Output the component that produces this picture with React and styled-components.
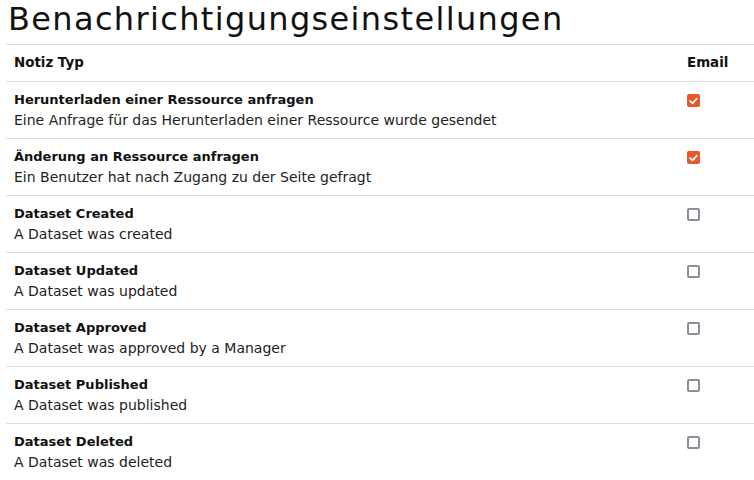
import React from 'react'
import styled, { createGlobalStyle } from 'styled-components'

const GlobalStyle = createGlobalStyle`
  body {
    margin: 0;
    background: #fff;
    font-family: "DejaVu Sans", "Open Sans", sans-serif;
    color: #1b1b1b;
  }
`

const Page = styled.div`
  padding: 0 0 0 6px;
  overflow: hidden;
`

const Title = styled.h1`
  margin: 0;
  padding: 0 0 0 2px;
  height: 44px;
  font-size: 32px;
  font-weight: 400;
  line-height: 38px;
  color: #111;
  letter-spacing: 1.35px;
`

const Table = styled.div`
  display: grid;
  grid-template-columns: 1fr 75px;
  width: 748px;
`

const Cell = styled.div`
  border-top: 1px solid #dcdcdc;
  padding: 8px;
  font-size: 14px;
  line-height: 20px;
  display: flex;
  flex-direction: column;
`

const HeadCell = styled(Cell)`
  font-weight: 700;
  font-size: 13.4px;
  color: #111;
`

const Name = styled.div`
  font-weight: 700;
  font-size: 13px;
  color: #111;
`

const Desc = styled.div`
  color: #222;
`

const Box = styled.span`
  margin-top: 4px;
  width: 13px;
  height: 13px;
  box-sizing: border-box;
  border-radius: 2px;
  display: flex;
  align-items: center;
  justify-content: center;
  background: ${(p) => (p.checked ? '#e8572a' : '#fff')};
  border: ${(p) => (p.checked ? 'none' : '2px solid #8d8d9b')};
`

const rows = [
  ['Herunterladen einer Ressource anfragen', 'Eine Anfrage für das Herunterladen einer Ressource wurde gesendet', true],
  ['Änderung an Ressource anfragen', 'Ein Benutzer hat nach Zugang zu der Seite gefragt', true],
  ['Dataset Created', 'A Dataset was created', false],
  ['Dataset Updated', 'A Dataset was updated', false],
  ['Dataset Approved', 'A Dataset was approved by a Manager', false],
  ['Dataset Published', 'A Dataset was published', false],
  ['Dataset Deleted', 'A Dataset was deleted', false],
]

const Check = ({ checked }) => (
  <Box checked={checked}>
    {checked && (
      <svg width="9" height="8" viewBox="0 0 9 8">
        <path d="M1.2 4.2 L3.5 6.3 L7.8 1.6" fill="none" stroke="#fff" strokeWidth="1.8" strokeLinecap="round" strokeLinejoin="round" />
      </svg>
    )}
  </Box>
)

export default function App() {
  return (
    <Page>
      <GlobalStyle />
      <Title>Benachrichtigungseinstellungen</Title>
      <Table>
        <HeadCell>Notiz Typ</HeadCell>
        <HeadCell>Email</HeadCell>
        {rows.map(([name, desc, checked]) => (
          <React.Fragment key={name}>
            <Cell>
              <Name>{name}</Name>
              <Desc>{desc}</Desc>
            </Cell>
            <Cell>
              <Check checked={checked} />
            </Cell>
          </React.Fragment>
        ))}
      </Table>
    </Page>
  )
}
